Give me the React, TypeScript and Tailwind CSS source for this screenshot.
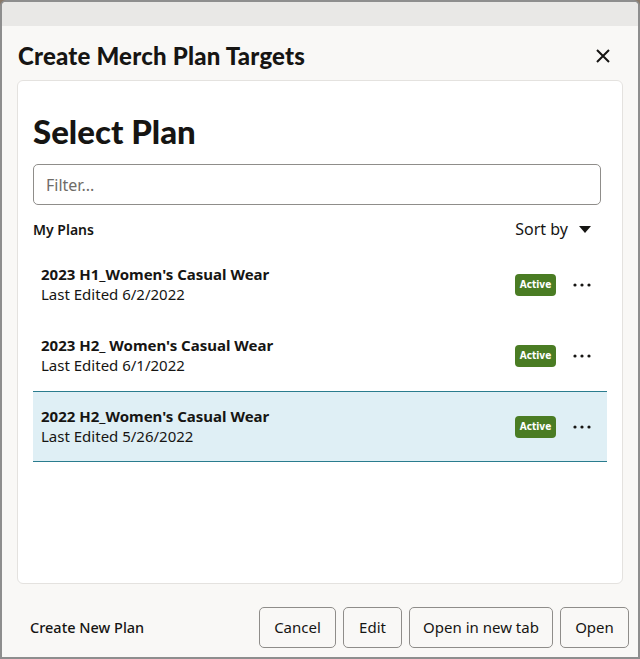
import React from 'react'

type Plan = { name: string; edited: string; selected?: boolean }

const plans: Plan[] = [
  { name: "2023 H1_Women's Casual Wear", edited: 'Last Edited 6/2/2022' },
  { name: "2023 H2_ Women's Casual Wear", edited: 'Last Edited 6/1/2022' },
  { name: "2022 H2_Women's Casual Wear", edited: 'Last Edited 5/26/2022', selected: true },
]

const buttons = [
  { label: 'Cancel', w: 'w-[77px]' },
  { label: 'Edit', w: 'w-[59px]' },
  { label: 'Open in new tab', w: 'w-[144px]' },
  { label: 'Open', w: 'w-[69px]' },
]

function PlanRow({ plan }: { plan: Plan }) {
  return (
    <div
      className={
        plan.selected
          ? 'flex h-[71px] items-center border-y border-[#2a7c8e] bg-[#dfeff5] pl-2 pr-4'
          : 'flex h-[71px] items-center border-y border-transparent pl-2 pr-4'
      }
    >
      <div className="flex flex-1 flex-col">
        <span className="text-[15px] font-bold leading-[20px] text-[#161513]">{plan.name}</span>
        <span className="text-[15px] leading-[21px] text-[#161513]">{plan.edited}</span>
      </div>
      <span className="flex h-[22px] w-[41px] items-center justify-center rounded-[4px] bg-[#4a7c23] text-[10px] font-bold text-white [font-family:'DejaVu_Sans_Condensed','DejaVu_Sans',sans-serif] [font-stretch:condensed]">
        Active
      </span>
      <svg className="ml-[17px]" width="18" height="4" viewBox="0 0 18 4">
        <circle cx="2" cy="2" r="1.6" fill="#161513" />
        <circle cx="9" cy="2" r="1.6" fill="#161513" />
        <circle cx="16" cy="2" r="1.6" fill="#161513" />
      </svg>
    </div>
  )
}

export default function App() {
  return (
    <div className="h-[659px] w-[640px] bg-[#8a7a6a] [font-family:'Noto_Sans',sans-serif]">
      <div className="flex h-full w-full flex-col overflow-hidden rounded-t-[6px] border-2 border-[#8e8e8e] bg-[#f9f8f6]">
        <div className="h-[24px] shrink-0 bg-[#e9e8e6]" />
        <div className="flex h-[54px] items-center justify-between pl-4 pr-[28px] pt-[6px]">
          <h1 className="text-[24px] font-black tracking-[0.2px] text-[#161513] [font-family:Lato,sans-serif]">
            Create Merch Plan Targets
          </h1>
          <svg width="14" height="14" viewBox="0 0 14 14">
            <path d="M1 1L13 13M13 1L1 13" stroke="#161513" strokeWidth="2" />
          </svg>
        </div>
        <div className="mx-[15px] flex h-[504px] flex-col rounded-[6px] border border-[#e4e2df] bg-white px-[15px] pt-[30px]">
          <h2 className="text-[33px] font-black leading-[40px] text-[#161513] [font-family:Lato,sans-serif]">
            Select Plan
          </h2>
          <div className="mt-[13px] mr-[6px] flex h-[41px] items-center rounded-[5px] border border-[#8f8d8a] px-3">
            <span className="text-[16px] text-[#6f6c68]">Filter...</span>
          </div>
          <div className="mt-[13px] flex h-[22px] items-center justify-between pr-4">
            <span className="text-[14px] font-semibold text-[#161513]">My Plans</span>
            <div className="flex items-center gap-[11px]">
              <span className="text-[16px] text-[#161513]">Sort by</span>
              <svg width="12" height="7" viewBox="0 0 12 7">
                <path d="M0 0H12L6 7Z" fill="#161513" />
              </svg>
            </div>
          </div>
          <div className="mt-[9px] flex flex-col">
            {plans.map(p => (
              <PlanRow key={p.name} plan={p} />
            ))}
          </div>
        </div>
        <div className="flex flex-1 items-start justify-between pl-[28px] pr-[9px] pt-[23px]">
          <span className="mt-[10px] text-[14.5px] font-medium text-[#161513]">Create New Plan</span>
          <div className="flex gap-[7px]">
            {buttons.map(b => (
              <button
                key={b.label}
                className={`${b.w} h-[41px] rounded-[5px] border border-[#8f8d8a] bg-[#f9f8f6] text-[15px] text-[#161513]`}
              >
                {b.label}
              </button>
            ))}
          </div>
        </div>
      </div>
    </div>
  )
}
